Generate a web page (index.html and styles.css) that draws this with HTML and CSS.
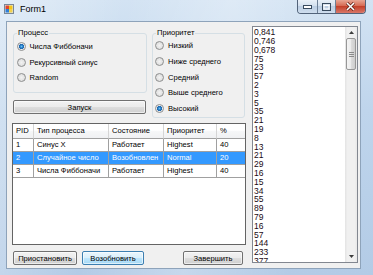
FILE: index.html
```html
<!DOCTYPE html>
<html>
<head>
<meta charset="utf-8">
<link rel="stylesheet" href="styles.css">
</head>
<body>
<div class="window">
  <div class="titlebar">
    <svg class="appicon" width="10" height="10" viewBox="0 0 10 10">
      <rect x="0.5" y="0.5" width="9" height="9" fill="#dfe6ee" stroke="#7a8796"/>
      <rect x="1.5" y="1.5" width="3.5" height="3.5" fill="#e2452b"/>
      <rect x="5" y="1.5" width="3.5" height="3.5" fill="#f5c518"/>
      <rect x="1.5" y="5" width="3.5" height="3.5" fill="#2f7fd6"/>
      <rect x="5" y="5" width="3.5" height="3.5" fill="#f2d04b"/>
    </svg>
    <span class="title">Form1</span>
    <div class="caption">
      <span class="cb cb-min">
        <svg width="9" height="5" viewBox="0 0 9 5"><rect x="0.5" y="1.5" width="8" height="3" fill="#fff" stroke="#384a5e"/></svg>
      </span>
      <span class="cb cb-max">
        <svg width="9" height="8" viewBox="0 0 9 8"><rect x="0.5" y="0.5" width="8" height="7" fill="none" stroke="#384a5e"/><rect x="2" y="2.5" width="5" height="3.5" fill="none" stroke="#fff"/></svg>
      </span>
      <span class="cb cb-close">
        <svg width="11" height="9" viewBox="0 0 11 9"><path d="M2 1 L9 8 M9 1 L2 8" stroke="#5b1d12" stroke-width="3"/><path d="M2 1 L9 8 M9 1 L2 8" stroke="#fff" stroke-width="1.6"/></svg>
      </span>
    </div>
  </div>
  <div class="client">
    <div class="leftcol">
      <div class="top">
        <div class="col-a">
          <fieldset class="group g1">
            <legend>Процесс</legend>
            <div class="radio checked"><span class="dot"></span>Числа Фиббоначи</div>
            <div class="radio"><span class="dot"></span>Рекурсивный синус</div>
            <div class="radio"><span class="dot"></span>Random</div>
          </fieldset>
          <button class="btn btn-start">Запуск</button>
        </div>
        <fieldset class="group g2">
          <legend>Приоритет</legend>
          <div class="radio"><span class="dot"></span>Низкий</div>
          <div class="radio"><span class="dot"></span>Ниже среднего</div>
          <div class="radio"><span class="dot"></span>Средний</div>
          <div class="radio"><span class="dot"></span>Выше среднего</div>
          <div class="radio checked"><span class="dot"></span>Высокий</div>
        </fieldset>
      </div>
      <div class="grid">
        <table>
          <colgroup>
            <col class="c-pid"><col class="c-type"><col class="c-state"><col class="c-prio"><col class="c-pct">
          </colgroup>
          <thead>
            <tr><th>PID</th><th>Тип процесса</th><th>Состояние</th><th>Приоритет</th><th>%</th></tr>
          </thead>
          <tbody>
            <tr><td>1</td><td>Синус X</td><td>Работает</td><td>Highest</td><td>40</td></tr>
            <tr class="sel"><td>2</td><td>Случайное число</td><td>Возобновлен</td><td>Normal</td><td>20</td></tr>
            <tr><td>3</td><td>Числа Фиббоначи</td><td>Работает</td><td>Highest</td><td>40</td></tr>
          </tbody>
        </table>
      </div>
      <div class="actions">
        <button class="btn b-pause">Приостановить</button>
        <button class="btn b-resume hot">Возобновить</button>
        <button class="btn b-end">Завершить</button>
      </div>
    </div>
    <div class="listbox">
      <div class="items">
        <div>0,841</div><div>0,746</div><div>0,678</div><div>75</div><div>23</div><div>57</div><div>2</div><div>3</div><div>5</div><div>35</div><div>21</div><div>19</div><div>8</div><div>13</div><div>21</div><div>29</div><div>16</div><div>15</div><div>34</div><div>55</div><div>89</div><div>79</div><div>16</div><div>57</div><div>144</div><div>233</div><div>377</div>
      </div>
      <div class="scrollbar">
        <div class="sb-arrow"><svg width="5" height="3" viewBox="0 0 5 3"><path d="M0 3 L2.5 0 L5 3 Z" fill="#3c3c3c"/></svg></div>
        <div class="sb-track">
          <div class="sb-thumb"><svg width="5" height="5" viewBox="0 0 5 5"><path d="M0 0.5 H5 M0 2.5 H5 M0 4.5 H5" stroke="#8a8a8a" stroke-width="1"/></svg></div>
        </div>
        <div class="sb-arrow"><svg width="5" height="3" viewBox="0 0 5 3"><path d="M0 0 L2.5 3 L5 0 Z" fill="#3c3c3c"/></svg></div>
      </div>
    </div>
  </div>
</div>
</body>
</html>
```
FILE: styles.css
```css
* { box-sizing: border-box; }

body {
  margin: 0;
  width: 373px;
  height: 275px;
  overflow: hidden;
  font-family: "Liberation Sans", Arial, sans-serif;
  font-size: 7.6px;
  color: #000;
}

.window {
  width: 373px;
  height: 275px;
  display: flex;
  flex-direction: column;
  background:
    linear-gradient(100deg, rgba(255,255,255,0.35) 0%, rgba(255,255,255,0) 30%, rgba(255,255,255,0.25) 55%, rgba(255,255,255,0) 80%),
    linear-gradient(180deg, #d3e3f3 0%, #bfd5ec 40%, #b3cbe6 100%);
}

.titlebar {
  height: 21px;
  flex: none;
  display: flex;
  align-items: flex-start;
}

.appicon {
  margin: 4px 0 0 4px;
  flex: none;
}

.title {
  margin: 4px 0 0 6px;
  font-size: 9px;
  line-height: 11px;
}

.caption {
  margin-left: auto;
  margin-right: 7px;
  display: flex;
  height: 14px;
  border: 1px solid #52637a;
  border-top: none;
  border-radius: 0 0 4px 4px;
  overflow: hidden;
}

.cb {
  display: flex;
  align-items: center;
  justify-content: center;
  height: 100%;
}

.cb-min, .cb-max {
  background: linear-gradient(180deg, #e9f0f8 0%, #d3e0ee 45%, #bccee3 50%, #cfdeee 100%);
  border-right: 1px solid #6d7f96;
}
.cb-min { width: 20px; }
.cb-max { width: 18px; }
.cb-close {
  width: 29px;
  background: linear-gradient(180deg, #e8a593 0%, #d66a53 45%, #c4402a 50%, #d9786a 100%);
}

.client {
  flex: 1;
  margin: 0 12px 6px 6px;
  background: #f0f0f0;
  border: 1px solid #8ea3ba;
  display: flex;
  padding: 4px 0 0 5px;
}

.leftcol {
  width: 234px;
  flex: none;
  display: flex;
  flex-direction: column;
  padding-top: 2px;
}

.top {
  display: flex;
  padding-left: 1px;
}

.col-a {
  width: 134px;
  display: flex;
  flex-direction: column;
}

.group {
  margin: 0;
  padding: 0;
  min-width: 0;
  border: 1px solid #d5dfe5;
  border-radius: 3px;
}

.group legend {
  margin-left: 3px;
  padding: 0 1px;
  font-size: 7.6px;
  line-height: 10px;
}

.g1 { height: 65px; padding-top: 1px; }
.g2 { width: 93px; height: 90px; margin-left: 5px; }

.radio {
  display: flex;
  align-items: center;
  height: 15.5px;
  white-space: nowrap;
}
.g2 .radio { height: 15.7px; }

.dot {
  flex: none;
  width: 9px;
  height: 9px;
  border-radius: 50%;
  border: 1px solid #8e8f8f;
  background: radial-gradient(circle at 50% 50%, #f2f2f2 0, #e2e2e2 60%, #cfcfcf 100%);
  margin: 0 4px 0 2px;
}
.g1 .dot { margin-left: 2.5px; }

.checked .dot {
  background: radial-gradient(circle at 50% 50%, #6fc0f0 0, #2a86cf 1.3px, #1d62a8 2.4px, #e8ecef 2.9px, #f5f5f5 4px);
}

.btn {
  font-family: "Liberation Sans", Arial, sans-serif;
  font-size: 7.6px;
  color: #000;
  padding: 0;
  height: 14px;
  border: 1px solid #707070;
  border-radius: 2px;
  background: linear-gradient(180deg, #f2f2f2 0%, #ebebeb 48%, #dddddd 52%, #cfcfcf 100%);
  box-shadow: inset 0 0 0 1px rgba(255,255,255,0.6);
}

.btn-start {
  margin-top: 7px;
  width: 133px;
}

.btn.hot {
  border-color: #3c7fb1;
  background: linear-gradient(180deg, #eaf6fd 0%, #d9f0fc 48%, #bee6fd 52%, #a7d9f5 100%);
}

.grid {
  margin-top: 5px;
  height: 122px;
  border: 1px solid #646464;
  background: #fff;
  overflow: hidden;
}

table {
  width: 232px;
  table-layout: fixed;
  border-collapse: separate;
  border-spacing: 0;
  font-size: 7.6px;
}

.c-pid { width: 21px; }
.c-type { width: 75px; }
.c-state { width: 55px; }
.c-prio { width: 53px; }
.c-pct { width: 28px; }

th, td {
  padding: 0 0 0 3px;
  text-align: left;
  font-weight: normal;
  white-space: nowrap;
  overflow: hidden;
}

th {
  line-height: 14px;
  background: linear-gradient(180deg, #ffffff 0%, #ffffff 45%, #f6f7f8 50%, #f0f1f3 100%);
  border-right: 1px solid #d5d5d5;
  border-bottom: 1px solid #a0a0a0;
}

td {
  line-height: 12px;
  border-right: 1px solid #a0a0a0;
  border-bottom: 1px solid #a0a0a0;
}

th:last-child, td:last-child { border-right: none; }

tr.sel td {
  background: #3399ff;
  color: #fff;
}

.actions {
  margin-top: 6px;
  display: flex;
}

.b-pause { width: 64px; margin-left: 1px; }
.b-resume { width: 62px; margin-left: 5px; }
.b-end { width: 60px; margin-left: auto; margin-right: 3px; }

.listbox {
  margin-left: 6px;
  width: 106px;
  height: 237px;
  border: 1px solid #828790;
  background: #fff;
  display: flex;
}

.items {
  flex: 1;
  padding: 1.3px 0 0 1px;
  font-size: 8.5px;
  line-height: 8.8px;
  overflow: hidden;
  color: #1a0a14;
}

.scrollbar {
  width: 12px;
  flex: none;
  display: flex;
  flex-direction: column;
  background: linear-gradient(90deg, #e3e3e3 0%, #f0f0f0 20%, #f0f0f0 80%, #e8e8e8 100%);
}

.sb-arrow {
  height: 11px;
  display: flex;
  align-items: center;
  justify-content: center;
  flex: none;
}

.sb-track {
  flex: 1;
  padding: 0 1px;
}

.sb-thumb {
  height: 32px;
  border: 1px solid #979797;
  border-radius: 2px;
  background: linear-gradient(90deg, #f4f4f4 0%, #ebebeb 48%, #dcdcdc 52%, #cdcdcd 100%);
  display: flex;
  align-items: center;
  justify-content: center;
}
```
